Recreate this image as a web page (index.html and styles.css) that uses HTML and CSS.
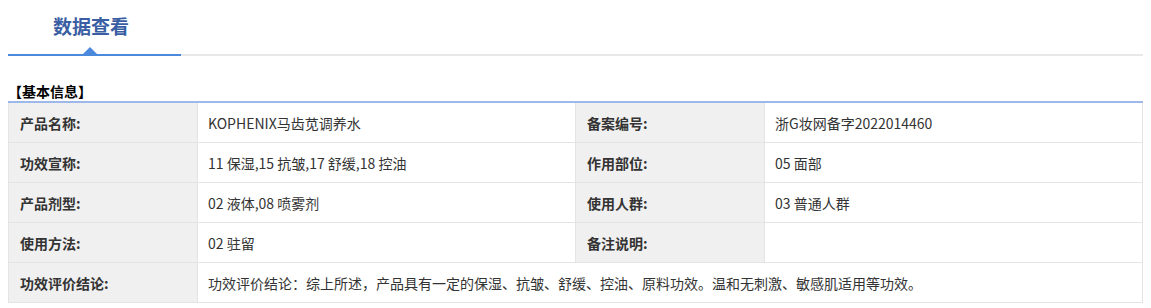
FILE: index.html
```html
<!DOCTYPE html>
<html lang="zh">
<head>
<meta charset="utf-8">
<link rel="stylesheet" href="styles.css">
</head>
<body>
<div class="tab-bar">
  <div class="tab">数据查看<span class="tab-arrow"></span></div>
</div>
<div class="section-title">【基本信息】</div>
<table class="info">
  <colgroup>
    <col class="c1"><col class="c2"><col class="c3"><col class="c4">
  </colgroup>
  <tr>
    <th>产品名称:</th><td>KOPHENIX马齿苋调养水</td>
    <th>备案编号:</th><td>浙G妆网备字2022014460</td>
  </tr>
  <tr>
    <th>功效宣称:</th><td>11 保湿,15 抗皱,17 舒缓,18 控油</td>
    <th>作用部位:</th><td>05 面部</td>
  </tr>
  <tr>
    <th>产品剂型:</th><td>02 液体,08 喷雾剂</td>
    <th>使用人群:</th><td>03 普通人群</td>
  </tr>
  <tr>
    <th>使用方法:</th><td>02 驻留</td>
    <th>备注说明:</th><td></td>
  </tr>
  <tr>
    <th>功效评价结论:</th><td colspan="3">功效评价结论：综上所述，产品具有一定的保湿、抗皱、舒缓、控油、原料功效。温和无刺激、敏感肌适用等功效。</td>
  </tr>
</table>
</body>
</html>
```

FILE: styles.css
```css
html, body {
  margin: 0;
  padding: 0;
  background: #ffffff;
}
body {
  padding: 8px;
  font-family: "Microsoft YaHei", "Noto Sans CJK SC", "Noto Sans", sans-serif;
  font-size: 14px;
  color: #333333;
}
.tab-bar {
  height: 46px;
  border-bottom: 2px solid #e8e8e8;
  display: flex;
  align-items: flex-end;
}
.tab {
  position: relative;
  width: 173px;
  box-sizing: border-box;
  height: 48px;
  margin-bottom: -2px;
  border-bottom: 2px solid #4a89dc;
  padding-left: 45px;
  padding-top: 4px;
  font-size: 19px;
  font-weight: bold;
  color: #3a5ea3;
  line-height: 28px;
}
.tab-arrow {
  position: absolute;
  left: 75px;
  bottom: 0;
  width: 0;
  height: 0;
  border-left: 7px solid transparent;
  border-right: 7px solid transparent;
  border-bottom: 7px solid #4a89dc;
}
.section-title {
  margin-top: 26px;
  height: 19px;
  line-height: 19px;
  font-weight: bold;
  font-size: 14px;
  color: #000000;
}
.info {
  width: 100%;
  table-layout: fixed;
  border-collapse: collapse;
  border-top: 2px solid #9fb8ec;
}
.c1 { width: 189px; }
.c2 { width: 378px; }
.c3 { width: 189px; }
.c4 { width: auto; }
.info th, .info td {
  height: 39px;
  padding: 0 0 0 10px;
  border: 1px solid #e4e4e4;
  text-align: left;
  vertical-align: middle;
  font-size: 14px;
  line-height: 18px;
}
.info th {
  background: #f0f0f0;
  font-weight: bold;
  color: #333333;
  padding-left: 11px;
}
.info td {
  color: #333333;
  font-weight: normal;
}
```
